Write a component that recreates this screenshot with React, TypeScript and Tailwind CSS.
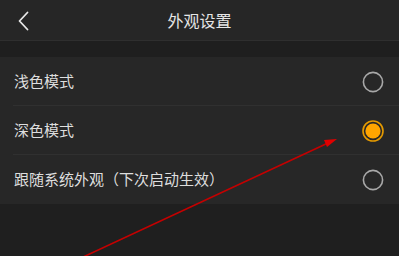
import React from "react";

const font = { fontFamily: '"Noto Sans CJK SC", "Noto Sans", sans-serif' };

function Radio({ checked }: { checked?: boolean }) {
  return checked ? (
    <svg width="24" height="24" viewBox="0 0 24 24">
      <circle cx="12" cy="12" r="10" fill="none" stroke="#e59a00" strokeWidth="1.6" />
      <circle cx="12" cy="12" r="7.6" fill="#ffa500" />
    </svg>
  ) : (
    <svg width="24" height="24" viewBox="0 0 24 24">
      <circle cx="12" cy="12" r="9.6" fill="none" stroke="#a8a8a8" strokeWidth="1.6" />
    </svg>
  );
}

function Row({ label, checked, last }: { label: string; checked?: boolean; last?: boolean }) {
  return (
    <div className="relative flex h-[49px] items-center justify-between pl-[14px] pr-[14px]">
      <span className="text-[15px] text-[#dedede]">{label}</span>
      <Radio checked={checked} />
      {!last && <div className="absolute bottom-0 left-[13px] right-0 h-px bg-[#303030]" />}
    </div>
  );
}

export default function App() {
  return (
    <div className="relative h-[256px] w-[399px] overflow-hidden bg-[#1f1f1f]" style={font}>
      <div className="relative flex h-[41px] items-center justify-center border-b border-[#2f2f2f] bg-[#262626]">
        <svg className="absolute left-[15px] top-[11px]" width="16" height="20" viewBox="0 0 16 20">
          <path d="M12.5 1.5 L4.5 10 L12.5 18.5" fill="none" stroke="#e8e8e8" strokeWidth="1.8" strokeLinecap="round" strokeLinejoin="round" />
        </svg>
        <span className="text-[16px] text-[#e6e6e6]">外观设置</span>
      </div>
      <div className="mt-[16px] bg-[#272727]">
        <Row label="浅色模式" />
        <Row label="深色模式" checked />
        <Row label="跟随系统外观（下次启动生效）" last />
      </div>
      <svg className="pointer-events-none absolute left-0 top-0" width="399" height="256" viewBox="0 0 399 256">
        <line x1="81" y1="258" x2="328" y2="143" stroke="#c40000" strokeWidth="1.6" />
        <polygon points="337,139 324,140 327,147" fill="#e00000" />
      </svg>
    </div>
  );
}
